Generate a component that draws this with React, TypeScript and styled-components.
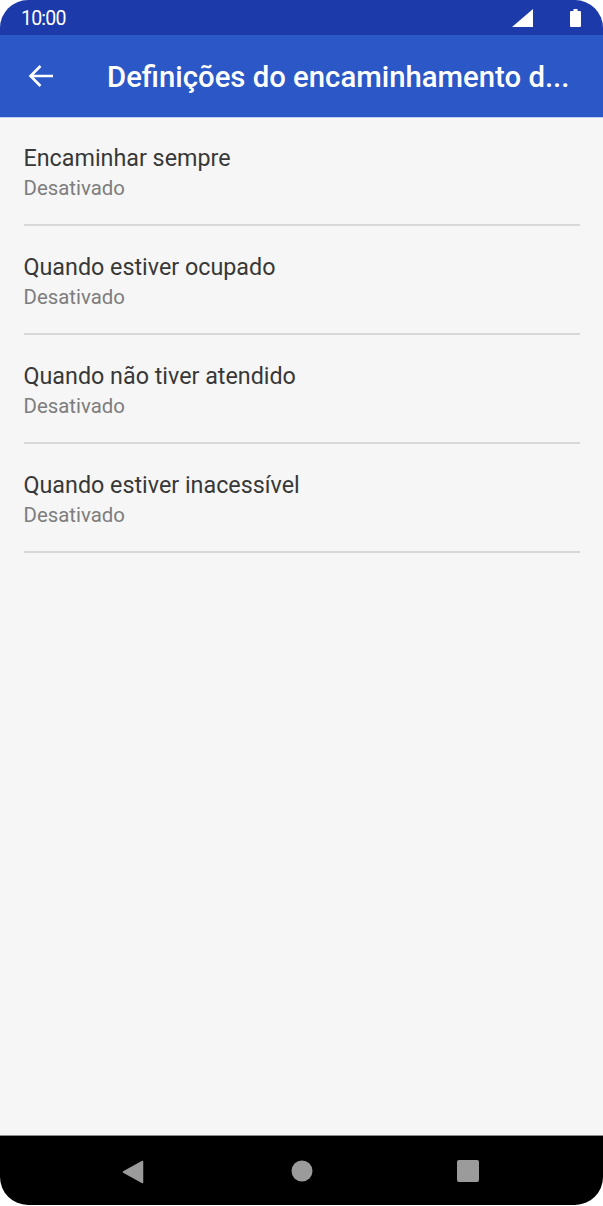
import React from "react";
import styled, { createGlobalStyle } from "styled-components";

const Global = createGlobalStyle`
  html, body { margin: 0; padding: 0; background: #fff; }
  body { font-family: Roboto, "Noto Sans", sans-serif; }
`;

const Phone = styled.div`
  width: 603px;
  height: 1205px;
  border-radius: 28px;
  overflow: hidden;
  display: flex;
  flex-direction: column;
  background: #f6f6f6;
`;

const StatusBar = styled.div`
  height: 35px;
  flex: none;
  background: #1c3aa9;
  display: flex;
  align-items: center;
  padding: 0 22px 0 21px;
  color: #fff;
  font-size: 19.5px;
  letter-spacing: -0.8px;
`;

const Clock = styled.span`
  flex: 1;
  padding-top: 2px;
`;

const StatusIcons = styled.div`
  display: flex;
  align-items: center;
  gap: 37px;
`;

const AppBar = styled.header`
  height: 83px;
  flex: none;
  box-sizing: border-box;
  background: #2b57c7;
  border-bottom: 1px solid #c4d0ee;
  display: flex;
  align-items: center;
  padding: 0 20px 0 28px;
  gap: 53px;
  color: #fff;
`;

const Title = styled.h1`
  margin: 0;
  flex: 1;
  min-width: 0;
  padding-top: 2px;
  font-size: 29.3px;
  font-weight: 500;
  white-space: nowrap;
`;

const List = styled.main`
  flex: 1;
  display: flex;
  flex-direction: column;
`;

const Row = styled.div`
  height: 109px;
  box-sizing: border-box;
  margin: 0 23px 0 23.5px;
  padding-top: 27px;
  border-bottom: 2px solid #d8d8d8;

  &:first-child {
    height: 108px;
    padding-top: 26px;
  }
`;

const RowTitle = styled.div`
  font-size: 23.3px;
  line-height: 28px;
  color: #383838;
`;

const RowSub = styled.div`
  font-size: 20.4px;
  line-height: 24px;
  margin-top: 4px;
  color: #7d7d7d;
`;

const NavBar = styled.nav`
  height: 70px;
  flex: none;
  box-sizing: border-box;
  border-top: 1px solid #8a8a8a;
  background: #000;
  display: flex;
  justify-content: center;
  align-items: flex-start;
  padding: 24px 2px 0 0;
  gap: 144px;
`;

const rows = ["Encaminhar sempre", "Quando estiver ocupado", "Quando não tiver atendido", "Quando estiver inacessível"];

export default function App() {
  return (
    <Phone>
      <Global />
      <StatusBar>
        <Clock>10:00</Clock>
        <StatusIcons>
          <svg width="21" height="20" viewBox="0 0 21 20"><path d="M21 1V19H0Z" fill="#fff" /></svg>
          <svg width="11" height="18" viewBox="0 0 11 18"><path d="M3.5 0H7.5V2H10a1 1 0 0 1 1 1V17a1 1 0 0 1-1 1H1a1 1 0 0 1-1-1V3a1 1 0 0 1 1-1H3.5Z" fill="#fff" /></svg>
        </StatusIcons>
      </StatusBar>
      <AppBar>
        <svg width="26" height="26" viewBox="0 0 26 26" fill="none" stroke="#fff" strokeWidth="2.6" style={{ flex: "none" }}>
          <path d="M25 13H3M12.5 3 2.5 13l10 10" />
        </svg>
        <Title>Definições do encaminhamento d...</Title>
      </AppBar>
      <List>
        {rows.map((r) => (
          <Row key={r}>
            <RowTitle>{r}</RowTitle>
            <RowSub>Desativado</RowSub>
          </Row>
        ))}
      </List>
      <NavBar>
        <svg width="25" height="24" viewBox="0 0 25 24"><path d="M20.5 1.5V22.5L1.5 12Z" fill="#9b9b9b" stroke="#9b9b9b" strokeWidth="1.5" strokeLinejoin="round" /></svg>
        <svg width="22" height="22" viewBox="0 0 22 22"><circle cx="11" cy="11" r="10.5" fill="#9b9b9b" /></svg>
        <svg width="22" height="22" viewBox="0 0 22 22"><rect width="22" height="22" rx="2" fill="#9b9b9b" /></svg>
      </NavBar>
    </Phone>
  );
}
